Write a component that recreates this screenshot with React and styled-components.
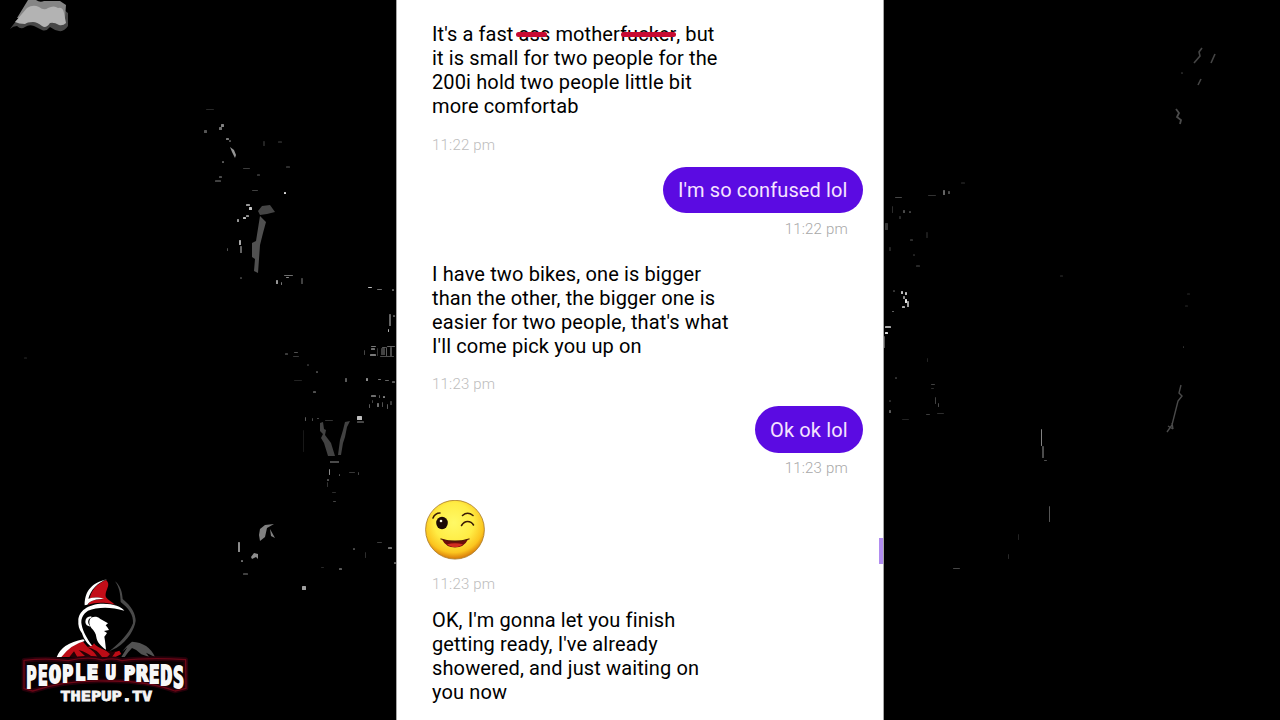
import React from "react";
import styled, { createGlobalStyle } from "styled-components";

const GlobalStyle = createGlobalStyle`
  body {
    margin: 0;
    background: #000;
    overflow: hidden;
  }
`;
const Stage = styled.main`
  display: grid;
  grid-template: 720px / 1280px;
  background: #000;
  font-family: Roboto, "Liberation Sans", sans-serif;
`;
const Backdrop = styled.svg`
  grid-area: 1 / 1;
  width: 1280px;
  height: 720px;
  filter: blur(0.45px);
`;
const Phone = styled.section`
  grid-area: 1 / 1;
  justify-self: center;
  display: grid;
  box-sizing: border-box;
  width: 488px;
  height: 720px;
  overflow: hidden;
  background: #fff;
  border: solid #a6a6a6;
  border-width: 0 1px;
`;
const Chat = styled.div`
  grid-area: 1 / 1;
  display: flex;
  flex-direction: column;
  padding: 22px 20px 0 35px;
`;
const ScrollThumb = styled.div`
  grid-area: 1 / 1;
  justify-self: end;
  width: 4px;
  height: 26px;
  margin-top: 538px;
  background: #b18cf0;
`;
const Message = styled.div`
  display: flex;
  flex-direction: column;
  align-items: ${(props) => (props.$mine ? "flex-end" : "flex-start")};
  margin-bottom: ${(props) => props.$gap || 0}px;
`;
const Text = styled.div`
  color: #000;
  font-size: 20px;
  line-height: 24px;
  letter-spacing: 0.13px;
  white-space: pre;
`;
const Line = styled.div`
  height: 24px;
  letter-spacing: ${(props) => (props.$tight ? "0.09px" : "inherit")};
`;
const Bubble = styled(Text)`
  box-sizing: border-box;
  width: ${(props) => props.$width}px;
  height: ${(props) => props.$height || 46}px;
  padding: ${(props) => (props.$height ? 12 : 11)}px 15px;
  border-radius: 24px;
  background: #5b0be2;
  color: #f6e3ff;
`;
const Time = styled.time`
  margin-top: ${(props) => props.$top}px;
  padding-right: ${(props) => (props.$mine ? 15 : 0)}px;
  color: ${(props) => (props.$mine ? "#a8a8a8" : "#bdbdbd")};
  font-size: 15px;
  font-weight: 300;
  line-height: 18px;
  letter-spacing: 0.2px;
`;
const Censored = styled.span`
  position: relative;
  &::after {
    content: "";
    position: absolute;
    left: ${(props) => props.$left}px;
    top: 10px;
    width: ${(props) => props.$width}px;
    height: 5px;
    border-radius: 3px;
    background: #c70a32;
  }
`;
const Emoji = styled.svg`
  display: block;
  width: 60px;
  height: 60px;
  margin-left: -7px;
`;
const Logo = styled.svg`
  grid-area: 1 / 1;
  align-self: end;
  width: 220px;
  height: 160px;
`;

// x, y, width, height, grey level
const specks = [
  [206, 109, 8, 1, 40], [204, 130, 3, 3, 85], [219, 127, 3, 3, 110], [221, 124, 3, 3, 130],
  [226, 138, 3, 2, 120], [229, 140, 2, 2, 80], [222, 161, 2, 2, 90], [215, 180, 6, 2, 65],
  [219, 176, 3, 2, 75], [243, 168, 7, 1, 60], [257, 174, 3, 2, 50], [286, 166, 4, 2, 45],
  [252, 190, 6, 1, 65], [284, 192, 2, 2, 220], [246, 204, 4, 2, 150], [249, 207, 3, 3, 200],
  [243, 217, 3, 2, 190], [246, 215, 3, 2, 140], [237, 219, 2, 3, 150], [239, 240, 2, 5, 170],
  [240, 246, 2, 7, 100], [227, 248, 1, 3, 80], [240, 277, 2, 2, 60], [276, 280, 2, 4, 150],
  [284, 275, 9, 1, 110], [286, 277, 3, 1, 140], [301, 278, 2, 6, 65], [281, 282, 1, 3, 120],
  [263, 141, 2, 5, 35], [278, 141, 4, 2, 35], [368, 287, 4, 1, 190], [377, 289, 5, 1, 110],
  [392, 289, 2, 2, 100], [389, 314, 2, 12, 100], [388, 329, 1, 3, 180], [393, 315, 2, 2, 90],
  [371, 346, 5, 1, 120], [382, 347, 4, 1, 90], [387, 346, 8, 1, 100], [364, 350, 1, 5, 70],
  [371, 348, 4, 2, 110], [370, 354, 6, 2, 120], [381, 348, 4, 7, 65], [386, 347, 1, 9, 90],
  [390, 347, 2, 9, 75], [377, 348, 1, 8, 50], [380, 356, 14, 1, 75], [285, 353, 3, 2, 60],
  [294, 352, 4, 1, 80], [293, 356, 6, 1, 55], [307, 364, 2, 2, 45], [316, 371, 2, 2, 70],
  [345, 378, 2, 4, 90], [366, 378, 2, 3, 140], [378, 379, 3, 1, 120], [385, 380, 4, 1, 100],
  [392, 381, 3, 2, 90], [294, 380, 8, 1, 35], [371, 395, 5, 2, 110], [379, 395, 1, 3, 90],
  [383, 396, 2, 2, 130], [372, 400, 1, 3, 70], [369, 404, 1, 4, 90], [377, 403, 2, 4, 110],
  [382, 402, 1, 5, 80], [387, 404, 1, 5, 90], [390, 401, 2, 4, 60], [313, 391, 3, 2, 80],
  [305, 417, 1, 4, 90], [312, 418, 1, 3, 75], [317, 418, 2, 1, 80], [325, 420, 8, 1, 50],
  [357, 416, 5, 4, 190], [357, 421, 7, 2, 70], [329, 469, 1, 6, 140], [327, 479, 2, 2, 80],
  [339, 474, 1, 2, 90], [349, 472, 6, 1, 55], [358, 472, 1, 3, 70], [332, 492, 4, 1, 45],
  [333, 501, 3, 1, 70], [303, 430, 1, 22, 24], [327, 482, 1, 5, 50],
  [238, 542, 2, 10, 140], [241, 560, 2, 2, 110], [243, 573, 5, 2, 65], [302, 586, 4, 4, 160],
  [353, 548, 2, 2, 75], [365, 552, 1, 6, 45], [388, 547, 4, 2, 110], [377, 542, 5, 1, 60],
  [339, 568, 3, 2, 90], [321, 567, 3, 1, 40], [394, 562, 2, 2, 100], [24, 357, 3, 2, 22],
  [895, 197, 7, 1, 70], [892, 206, 1, 7, 45], [903, 210, 2, 3, 75], [909, 211, 2, 2, 65],
  [885, 223, 3, 7, 55], [889, 247, 2, 4, 35], [899, 216, 2, 3, 40], [910, 239, 3, 2, 45],
  [913, 254, 2, 2, 35], [916, 265, 4, 2, 40], [928, 195, 8, 1, 50], [943, 190, 2, 5, 100],
  [948, 191, 2, 3, 75], [961, 182, 4, 2, 25], [926, 232, 2, 6, 28], [1060, 275, 3, 2, 25],
  [901, 291, 2, 3, 190], [905, 292, 2, 3, 190], [905, 299, 2, 4, 230], [902, 306, 3, 2, 170],
  [907, 301, 2, 6, 160], [903, 296, 2, 3, 140], [893, 290, 2, 2, 55], [892, 311, 2, 1, 110],
  [885, 326, 6, 2, 170], [885, 332, 3, 2, 220], [884, 336, 1, 12, 90], [895, 377, 2, 2, 50],
  [889, 410, 2, 3, 90], [889, 400, 2, 2, 45], [902, 419, 7, 1, 35], [931, 384, 4, 1, 65],
  [931, 388, 3, 1, 45], [935, 397, 1, 7, 65], [938, 403, 1, 4, 75], [926, 414, 4, 1, 60],
  [937, 413, 7, 1, 45], [927, 358, 1, 4, 35], [1041, 429, 1, 17, 130], [1042, 446, 2, 12, 75],
  [1044, 460, 3, 1, 80], [1049, 506, 1, 16, 85], [1018, 534, 1, 6, 35], [1008, 554, 1, 5, 40],
  [953, 568, 7, 1, 70], [1181, 72, 2, 2, 35], [1187, 293, 3, 2, 22], [1185, 305, 3, 2, 22],
  [1183, 346, 1, 2, 50],
];

const Scenery = () => (
  <Backdrop viewBox="0 0 1280 720" fill="none">
    {specks.map(([x, y, width, height, grey]) => (
      <rect
        key={`${x}-${y}`}
        x={x}
        y={y}
        width={width}
        height={height}
        rx="0.6"
        fill={`rgb(${grey},${grey},${grey})`}
      />
    ))}
    <path
      d="M10 29L16 21L64 10L68 13V26Q64 32 59 31T50 27Q46 32 42 30T34 26Q29 24 25 27T17 26Q13 26 10 29z"
      fill="#474747"
    />
    <path d="M28 0H36Q40 3 44 1H60L66 5L65 18H17z" fill="#858585" />
    <path
      d="M15 22L27 8Q33 4 39 7Q44 11 48 8Q54 5 58 8Q63 7 64 13L66 23Q63 26 59 25Q54 22 50 23Q46 29 42 26Q37 22 33 22Q27 22 25 24Q19 24 15 22z"
      fill="#b3b3b3"
    />
    <path d="M230 147l4 3 2 5-1 3-3-6z" fill="#959595" />
    <path d="M262 206l8-1 5 7-8 2-7 1-2-4z" fill="#454545" />
    <path d="M260 216l6 6-3 11-3 12-2 28-4-2 1-12-3-2V243l4-2z" fill="#505050" />
    <path d="M320 423l3-1 1 7 2 1-1 5 6 8 4 13h-7l-4-13-3-5 2-4-3-3z" fill="#424242" />
    <path d="M345 422l5-1-3 6-2 10-2 6-2 12h-3l2-15 3-10z" fill="#424242" />
    <path d="M330 461h9v2h-9z" fill="#4b4b4b" />
    <path d="M260 529l5-4 9-1-7 4-2 9-5 4-1-6zM270 529l5 9-4-2z" fill="#808080" />
    <path d="M251 557l3-4 4 1v5l-2-2-4 2z" fill="#8d8d8d" />
    <path d="M1202 48l-3 4 1 4-6 7M1215 54l-4 9M1201 79l-3 6" stroke="#454545" strokeWidth="1.6" />
    <path d="M1176 109l3 4-2 4 4 3-1 4" stroke="#4b4b4b" strokeWidth="1.8" />
    <path
      d="M1181 385l-2 8 3 3-4 5-6 24-5 7M1168 426l5 3M1172 423l1 6"
      stroke="#4a4a4a"
      strokeWidth="1.4"
    />
  </Backdrop>
);

const Wink = () => (
  <Emoji viewBox="0 0 60 60">
    <defs>
      <radialGradient id="face" cx="48%" cy="38%" r="60%">
        <stop offset="0" stopColor="#fff966" />
        <stop offset=".55" stopColor="#ffed45" />
        <stop offset=".85" stopColor="#fbc51f" />
        <stop offset="1" stopColor="#dd850d" />
      </radialGradient>
    </defs>
    <circle cx="30" cy="29.7" r="29.4" fill="url(#face)" stroke="#a77825" strokeWidth=".8" />
    <ellipse cx="17" cy="23" rx="5.8" ry="6.2" fill="#1c0906" />
    <circle cx="16" cy="21" r="1.3" fill="#fffbe8" />
    <path
      d="M8 18q2-5 7-5M37.5 15.5q5-4.5 10.5 0M36.5 25.5q2.5-4 6-4 4 0 6 3.5"
      fill="none"
      stroke="#3b1b05"
      strokeWidth="1.6"
      strokeLinecap="round"
    />
    <path d="M17 39.5q13 3.5 26 0-4 8-13 8t-13-8z" fill="#6d0d0a" />
    <path d="M22 44.2q8-2 16 0-3 2.8-8 2.8t-8-2.8z" fill="#d22c20" />
    <path d="M16 39q14 4.5 28 0" fill="none" stroke="#4b1608" strokeWidth="1.3" strokeLinecap="round" />
  </Emoji>
);

// letter, x, width, cap top, baseline
const wordmark = [
  ["P", 79, 31, 314, 386], ["E", 114, 29, 314, 379], ["O", 146, 37, 313, 373],
  ["P", 187, 33, 312, 368], ["L", 225, 31, 312, 364], ["E", 260, 34, 312, 361],
  ["U", 317, 30, 311, 359], ["P", 372, 33, 312, 362], ["R", 408, 36, 312, 366],
  ["E", 447, 31, 312, 372], ["D", 481, 36, 313, 379], ["S", 519, 33, 314, 386],
];

const BrandLogo = () => (
  <Logo viewBox="0 0 660 480">
    <path
      d="M318 60C336 75 312 92 318 112C324 120 336 126 345 134C310 125 285 128 264 134C270 120 290 119 310 117C298 111 280 112 269 115C275 90 290 72 318 60z"
      fill="#c30d18"
    />
    <path
      d="M254 136C254 100 268 70 322 57C292 68 272 90 265 116C280 111 298 112 312 116C290 117 270 120 262 134z"
      fill="#fff"
    />
    <path
      d="M235 182C235 155 262 131 310 131C342 131 364 140 373 152C332 139 290 141 264 152C247 163 242 178 245 194C249 215 262 238 282 265C262 254 251 237 246 220C237 208 234 195 235 182z"
      fill="#fff"
    />
    <path
      d="M345 64C363 78 367 100 368 117C397 140 407 165 407 182C404 207 384 242 350 263L328 274C360 248 386 222 399 190C401 165 386 145 362 126C361 100 358 82 345 64z"
      fill="#4a4a4a"
    />
    <path
      d="M270 178C276 168 292 169 300 176L324 190L317 196L323 203L327 210L312 213L321 219L317 225L313 230L315 242L318 269C303 260 291 246 289 232C288 220 282 212 274 204C268 196 266 186 270 178z"
      fill="#fff"
    />
    <path d="M274 173Q262 177 265 190Q267 196 272 200Q257 198 256 186Q256 170 274 169z" fill="#fff" />
    <path
      d="M182 291Q200 258 248 244L262 260Q275 262 282 250Q290 262 318 272Q338 280 358 272L364 282L345 292z"
      fill="#bd0c16"
    />
    <path
      d="M208 291l14-17 10 17zM236 270l22 21h18q-14-14-40-21zM262 262q28 5 44 29h-14q-10-18-30-29zM318 272l12 10-8 9h14l10-14z"
      fill="#240205"
    />
    <path d="M170 292Q185 250 250 238L254 243Q212 254 184 291z" fill="#fff" />
    <path
      d="M366 275Q380 256 396 245Q446 248 465 291L438 278L448 291L424 283Q410 268 396 264Q384 276 374 291L364 291L382 262z"
      fill="#515151"
    />
    <path
      d="M72 301q72-8 133 1 58-14 103-2 35-8 58 2 78-10 191-3l1 86-33 8q-83-32-205-30-120-4-222 30l-26-7z"
      fill="#080002"
      stroke="#26000a"
      strokeWidth="14"
      strokeLinejoin="round"
    />
    <path
      d="M72 301q72-8 133 1 58-14 103-2 35-8 58 2 78-10 191-3l1 86-33 8q-83-32-205-30-120-4-222 30l-26-7z"
      fill="none"
      stroke="#6d0616"
      strokeWidth="4"
      strokeLinejoin="round"
    />
    {wordmark.map(([letter, x, width, top, base]) => (
      <text
        key={x}
        x={x}
        y={base - 3}
        textLength={width}
        lengthAdjust="spacingAndGlyphs"
        fontFamily="DejaVu Sans Mono, monospace"
        fontWeight="700"
        fontSize={(base - top - 6) / 0.729}
        fill="#f8f8f8"
        stroke="#f8f8f8"
        strokeWidth="6"
        strokeLinejoin="miter"
      >
        {letter}
      </text>
    ))}
    <text
      x="181"
      y="423"
      textLength="276"
      lengthAdjust="spacingAndGlyphs"
      fontFamily="DejaVu Sans Mono, monospace"
      fontWeight="700"
      fontSize="41"
      fill="#f5f5f5"
      stroke="#f5f5f5"
      strokeWidth="2.5"
    >
      THEPUP.TV
    </text>
  </Logo>
);

const Lines = ({ lines }) => lines.map((line) => <Line key={line}>{line}</Line>);

const App = () => {
  return (
    <>
      <GlobalStyle />
      <Stage>
        <Scenery />
        <Phone>
          <Chat>
            <Message $gap={13}>
              <Text>
                <Line $tight>
                  It's a fast <Censored $left={-3} $width={31}>ass</Censored> mother
                  <Censored $left={1} $width={55}>fucker</Censored>, but
                </Line>
                <Lines
                  lines={[
                    "it is small for two people for the",
                    "200i hold two people little bit",
                    "more comfortab",
                  ]}
                />
              </Text>
              <Time $top={18}>11:22 pm</Time>
            </Message>
            <Message $mine $gap={24}>
              <Bubble $width={200}>I'm so confused lol</Bubble>
              <Time $mine $top={7}>11:22 pm</Time>
            </Message>
            <Message $gap={13}>
              <Text>
                <Lines
                  lines={[
                    "I have two bikes, one is bigger",
                    "than the other, the bigger one is",
                    "easier for two people, that's what",
                    "I'll come pick you up on",
                  ]}
                />
              </Text>
              <Time $top={17}>11:23 pm</Time>
            </Message>
            <Message $mine $gap={23}>
              <Bubble $width={108} $height={47}>Ok ok lol</Bubble>
              <Time $mine $top={6}>11:23 pm</Time>
            </Message>
            <Message $gap={15}>
              <Wink />
              <Time $top={15}>11:23 pm</Time>
            </Message>
            <Message>
              <Text>
                <Lines
                  lines={[
                    "OK, I'm gonna let you finish",
                    "getting ready, I've already",
                    "showered, and just waiting on",
                    "you now",
                  ]}
                />
              </Text>
            </Message>
          </Chat>
          <ScrollThumb />
        </Phone>
        <BrandLogo />
      </Stage>
    </>
  );
};

export default App;
